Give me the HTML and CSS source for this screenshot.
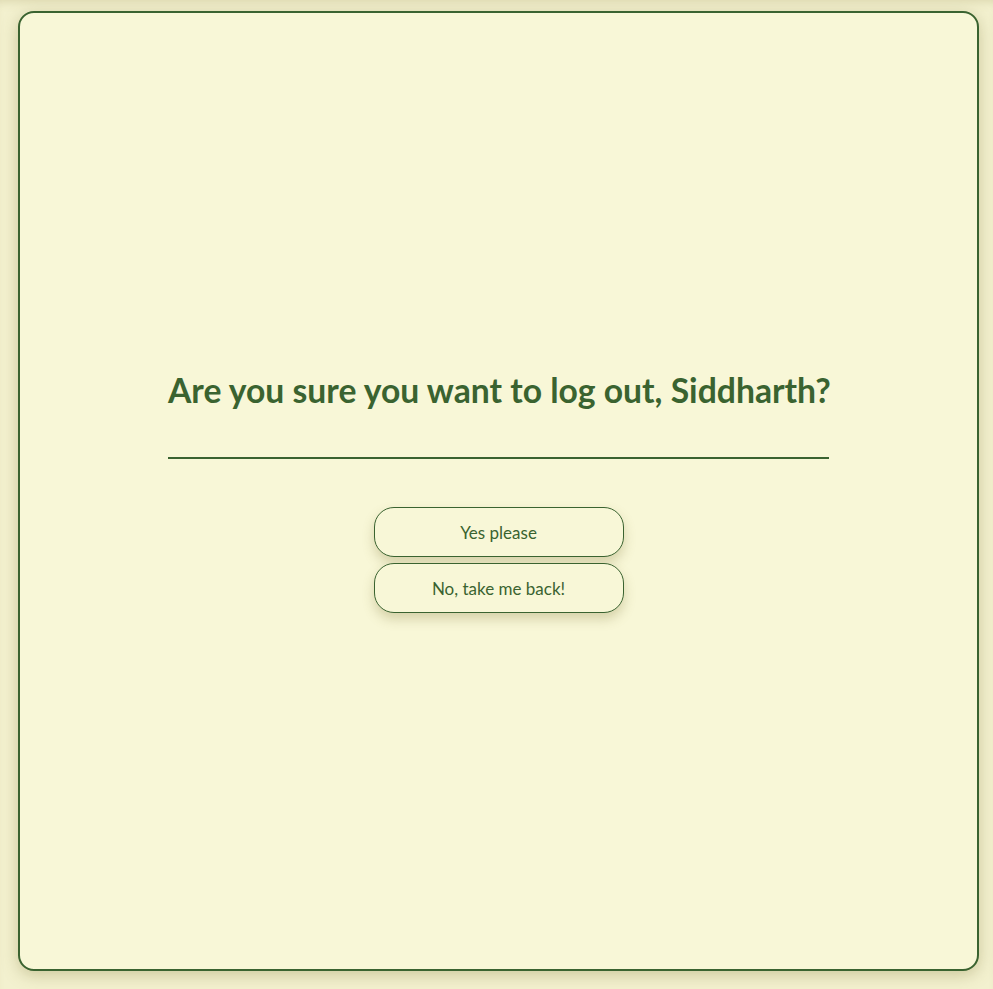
FILE: index.html
```html
<!DOCTYPE html>
<html lang="en">
<head>
<meta charset="utf-8">
<title>Log out</title>
<link rel="stylesheet" href="styles.css">
</head>
<body>
<main class="card">
  <section class="dialog">
    <h1 class="title">Are you sure you want to log out, Siddharth?</h1>
    <div class="actions">
      <button class="btn">Yes please</button>
      <button class="btn">No, take me back!</button>
    </div>
  </section>
</main>
</body>
</html>
```
FILE: styles.css
```css
html, body {
  margin: 0;
  padding: 0;
}
body {
  background: #f3f1cf;
  font-family: Lato, "Open Sans", sans-serif;
  color: #3a6330;
  padding: 11px 14px 18px 18px;
  box-shadow: inset 0 8px 10px -6px rgba(150, 140, 80, 0.25);
  min-height: 989px;
  box-sizing: border-box;
}
.card {
  box-sizing: border-box;
  width: 961px;
  height: 960px;
  background: #f8f7d7;
  border: 2px solid #3a6330;
  border-radius: 16px;
  box-shadow: 0 4px 16px rgba(130, 120, 60, 0.35);
  display: flex;
  align-items: center;
  justify-content: center;
}
.dialog {
  display: flex;
  flex-direction: column;
  align-items: center;
  padding-top: 4px;
}
.title {
  width: 661px;
  margin: 0;
  text-align: center;
  white-space: nowrap;
  font-size: 33.7px;
  font-weight: 700;
  letter-spacing: 0;
  padding: 0 0 50px;
  border-bottom: 2px solid #3a6330;
  line-height: 34px;
}
.actions {
  margin-top: 48px;
  display: flex;
  flex-direction: column;
  gap: 6px;
}
.btn {
  width: 250px;
  height: 50px;
  background: #f8f7d7;
  border: 1px solid #3a6330;
  border-radius: 20px;
  color: #3a6330;
  font-family: Lato, "Open Sans", sans-serif;
  font-size: 17px;
  box-shadow: 0 6px 12px rgba(140, 130, 70, 0.32);
  cursor: pointer;
}
```
